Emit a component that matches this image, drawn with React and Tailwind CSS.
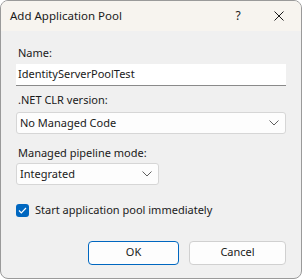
import React, { useState } from "react";

const Chevron = () => (
  <svg width="10" height="6" viewBox="0 0 10 6" fill="none">
    <path d="M0.5 0.5 L5 5 L9.5 0.5" stroke="#5f5f5f" strokeWidth="1" />
  </svg>
);

export default function App() {
  const [checked, setChecked] = useState(true);

  return (
    <div className="w-[302px] h-[279px] bg-white" style={{ fontFamily: '"Noto Sans", sans-serif' }}>
      <div className="w-full h-full flex flex-col border border-[#9a9a9a] rounded-[8px] overflow-hidden bg-[#f0f0f0] text-[11px] text-[#1a1a1a]">
        {/* title bar */}
        <div className="h-[30px] shrink-0 flex items-center bg-[#f7f4ef] pl-[9px] text-[11.5px]">
          <span className="flex-1">Add Application Pool</span>
          <span className="w-[10px] text-center text-[12px] mr-[31px]">?</span>
          <svg className="mr-[17px]" width="10" height="10" viewBox="0 0 10 10">
            <path d="M0.5 0.5 L9.5 9.5 M9.5 0.5 L0.5 9.5" stroke="#1a1a1a" strokeWidth="1" />
          </svg>
        </div>

        <div className="flex-1 flex flex-col px-[15px] pt-[14px]">
          <label className="pl-[2px] leading-[16px]">Name:</label>
          <div className="mt-[3px] h-[22px] bg-white border-b border-[#8a8a8a] flex items-center px-[2px]">
            IdentityServerPoolTest
          </div>

          <label className="mt-[6px] pl-[2px] leading-[16px]">.NET CLR version:</label>
          <div className="mt-[4px] h-[22px] bg-[#fdfdfd] border border-[#d6d6d6] rounded-[3px] flex items-center justify-between pl-[3px] pr-[6px]">
            <span>No Managed Code</span>
            <Chevron />
          </div>

          <label className="mt-[11px] pl-[2px] leading-[16px]">Managed pipeline mode:</label>
          <div className="mt-[2px] w-[143px] h-[22px] bg-[#fdfdfd] border border-[#d6d6d6] rounded-[3px] flex items-center justify-between pl-[3px] pr-[6px]">
            <span>Integrated</span>
            <Chevron />
          </div>

          <div className="mt-[17px] flex items-center gap-[6px] cursor-pointer" onClick={() => setChecked(!checked)}>
            <div className="w-[13px] h-[13px] rounded-[3px] bg-[#0067c0] flex items-center justify-center">
              {checked && (
                <svg width="9" height="7" viewBox="0 0 9 7" fill="none">
                  <path d="M1 3.5 L3.3 5.8 L8 1" stroke="white" strokeWidth="1.2" />
                </svg>
              )}
            </div>
            <span>Start application pool immediately</span>
          </div>

          <div className="mt-[22px] flex justify-end gap-[10px]">
            <button className="w-[91px] h-[24px] bg-[#fdfdfd] border border-[#0067c0] rounded-[4px]">OK</button>
            <button className="w-[97px] h-[24px] bg-[#fdfdfd] border border-[#d0d0d0] rounded-[4px]">Cancel</button>
          </div>
        </div>
      </div>
    </div>
  );
}
